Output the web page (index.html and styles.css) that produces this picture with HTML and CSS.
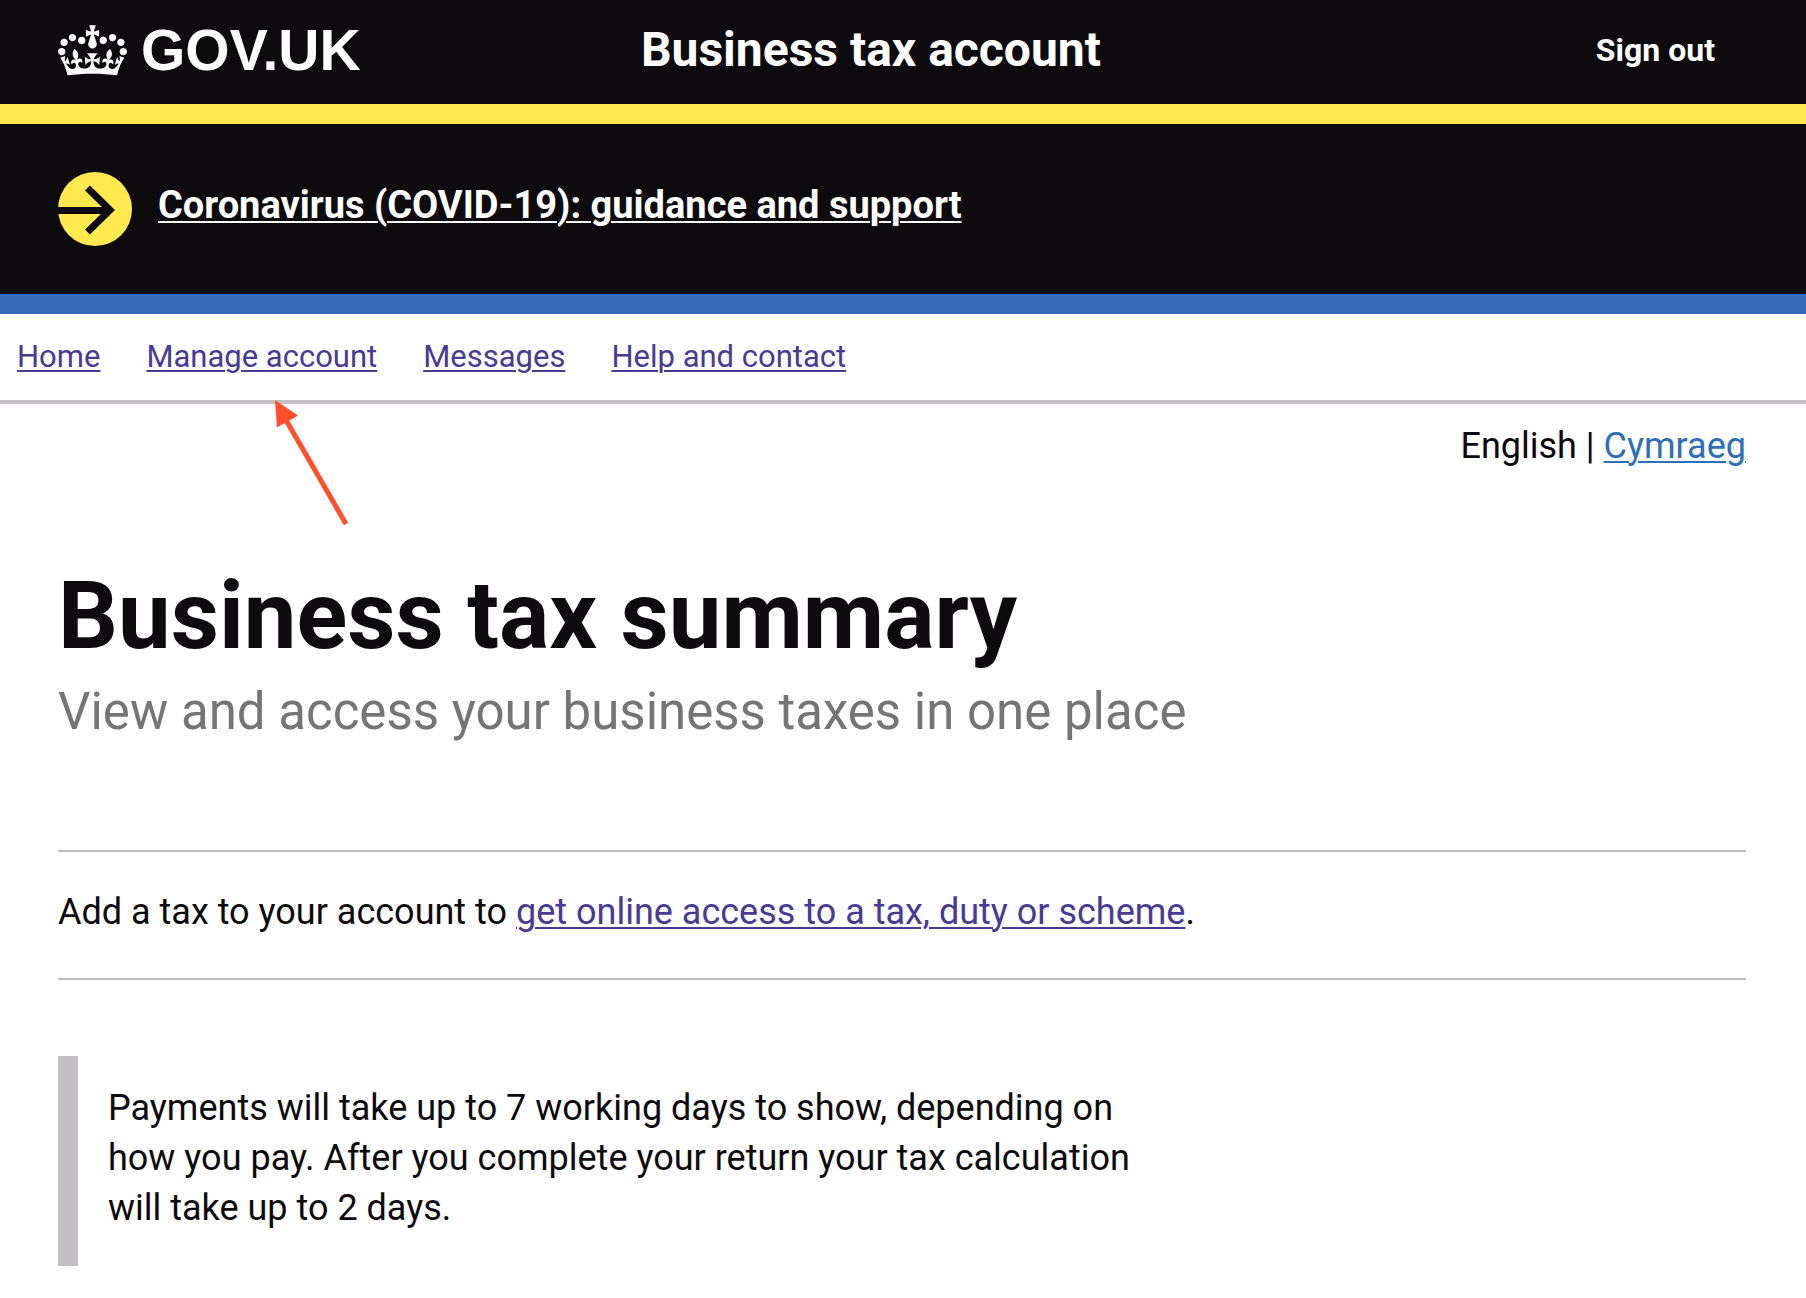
FILE: index.html
```html
<!DOCTYPE html>
<html lang="en">
  <head>
    <meta charset="UTF-8" />
    <meta name="viewport" content="width=device-width, initial-scale=1.0" />
    <title>Business tax account - GOV.UK</title>
    <link rel="stylesheet" href="styles.css">
  </head>
  <body>
    <header class="header">
      <a class="logo" href="#">
        <svg class="crown" viewBox="0 0 132 97" aria-hidden="true">
          <path d="M25 30.2c3.5 1.5 7.7-.2 9.1-3.7 1.5-3.6-.2-7.8-3.9-9.2-3.6-1.4-7.6.3-9.1 3.9-1.4 3.5.3 7.5 3.9 9zM9 39.5c3.6 1.5 7.8-.2 9.2-3.7 1.5-3.6-.2-7.8-3.9-9.1-3.6-1.5-7.6.2-9.1 3.8-1.4 3.5.3 7.5 3.8 9zM4.4 57.2c3.5 1.5 7.7-.2 9.1-3.8 1.5-3.6-.2-7.7-3.9-9.1-3.5-1.5-7.6.3-9.1 3.8-1.4 3.5.3 7.6 3.9 9.1zm38.3-21.4c3.5 1.5 7.7-.2 9.1-3.8 1.5-3.6-.2-7.7-3.9-9.1-3.6-1.5-7.6.3-9.1 3.8-1.3 3.6.4 7.7 3.9 9.1zm64.4-5.6c-3.6 1.5-7.8-.2-9.1-3.7-1.5-3.6.2-7.8 3.8-9.2 3.6-1.4 7.7.3 9.2 3.9 1.3 3.5-.4 7.5-3.9 9zm15.9 9.3c-3.6 1.5-7.7-.2-9.1-3.7-1.5-3.6.2-7.8 3.7-9.1 3.6-1.5 7.7.2 9.2 3.8 1.5 3.5-.3 7.5-3.8 9zm4.7 17.7c-3.6 1.5-7.8-.2-9.2-3.8-1.5-3.6.2-7.7 3.9-9.1 3.6-1.5 7.7.3 9.2 3.8 1.3 3.5-.4 7.6-3.9 9.1zM89.3 35.8c-3.6 1.5-7.8-.2-9.2-3.8-1.4-3.6.2-7.7 3.9-9.1 3.6-1.5 7.7.3 9.2 3.8 1.4 3.6-.3 7.7-3.9 9.1zM69.7 17.7l8.9 4.7V9.3l-8.9 2.8c-.2-.3-.5-.6-.9-.9L72.4 0H59.6l3.5 11.2c-.3.3-.6.5-.9.9l-8.8-2.8v13.1l8.8-4.7c.3.3.6.7.9.9l-5 15.4v.1c-.2.8-.4 1.6-.4 2.4 0 4.1 3.1 7.5 7 8.1h.2c.3 0 .7.1 1 .1.4 0 .7 0 1-.1h.2c4-.6 7.1-4.1 7.1-8.1 0-.8-.1-1.7-.4-2.4V34l-5.1-15.4c.4-.2.7-.6 1-.9zM66 92.8c16.9 0 32.8 1.1 47.1 3.2 4-16.9 8.9-26.7 14-33.5l-9.6-3.4c1 4.9 1.1 7.2 0 10.2-1.5-1.4-3-4.3-4.2-8.7L108.6 76c2.8-2 5-3.2 7.5-3.3-4.4 9.4-10 11.9-13.6 11.2-4.3-.8-6.3-4.6-5.6-7.9 1-4.7 5.7-5.9 8-.5 4.3-8.7-3-11.4-7.6-8.8 7.1-7.2 7.9-13.5 2.1-21.1-8 6.1-8.1 12.3-4.5 20.8-4.7-5.4-12.1-2.5-9.5 6.2 3.4-5.2 7.9-2 7.2 3.1-.6 4.3-6.4 7.8-13.5 7.2-10.3-.9-10.9-8-11.2-13.8 2.5-.5 7.1 1.8 11 7.3L80.2 60c-4.1 4.4-8 5.3-12.3 5.4 1.4-4.4 8-11.6 8-11.6H55.5s6.4 7.2 7.9 11.6c-4.2-.1-8-1-12.3-5.4l1.4 16.4c3.9-5.5 8.5-7.7 10.9-7.3-.3 5.8-.9 12.8-11.1 13.8-7.2.6-12.9-2.9-13.5-7.2-.7-5 3.8-8.3 7.1-3.1 2.7-8.7-4.6-11.6-9.4-6.2 3.7-8.5 3.6-14.7-4.6-20.8-5.8 7.6-5 13.9 2.2 21.1-4.7-2.6-11.9.1-7.7 8.8 2.3-5.5 7.1-4.2 8.1.5.7 3.3-1.3 7.1-5.7 7.9-3.5.7-9-1.8-13.5-11.2 2.5.1 4.7 1.3 7.5 3.3l-4.7-15.4c-1.2 4.4-2.7 7.2-4.3 8.7-1.1-3-.9-5.3 0-10.2l-9.5 3.4c5 6.9 9.9 16.7 14 33.5 14.8-2.1 30.8-3.2 47.7-3.2z" />
        </svg>
        <span>GOV.UK</span>
      </a>
      <a class="service-name" href="#">Business tax account</a>
      <a class="sign-out" href="#">Sign out</a>
    </header>

    <section class="covid">
      <svg class="covid-icon" viewBox="0 0 74 74" aria-hidden="true">
        <circle cx="37" cy="37" r="37" />
        <path d="M0 38.500H50M29.500 16L52 38L29.500 60" />
      </svg>
      <a class="covid-link" href="#">Coronavirus (COVID-19): guidance and support</a>
    </section>

    <nav class="nav">
      <a href="#">Home</a>
      <a href="#">Manage account</a>
      <a href="#">Messages</a>
      <a href="#">Help and contact</a>
      <!-- pointer to "Manage account" -->
      <svg class="pointer" viewBox="0 0 78 130" aria-hidden="true">
        <path class="pointer-line" d="M14 22L74 126" />
        <path class="pointer-head" d="M3 2L26 17.500L5 29.500z" />
      </svg>
    </nav>

    <main class="main">
      <p class="language">English | <a href="#">Cymraeg</a></p>

      <h1 class="title">Business tax summary</h1>
      <p class="caption">View and access your business taxes in one place</p>

      <p class="add-tax">
        Add a tax to your account to
        <a href="#">get online access to a tax, duty or scheme</a>.
      </p>

      <div class="inset">
        Payments will take up to 7 working days to show, depending on how you pay. After you complete your return your tax calculation will take up to 2 days.
      </div>
    </main>
  </body>
</html>
```

FILE: styles.css
```css
* {
  box-sizing: border-box;
}

body {
  margin: 0;
  background-color: #fefefe;
  color: #0d0b0e;
  font-family: Roboto, "Liberation Sans", sans-serif;
  font-size: 36px;
  line-height: 50px;
}

p,
h1 {
  margin: 0;
}

a {
  color: #483a95;
  text-decoration-thickness: 2px;
  text-underline-offset: 3px;
}

/* header */
.header {
  display: grid;
  grid-template-columns: 35% 1fr auto;
  column-gap: 3px;
  align-items: center;
  padding: 20px 91px 24px 58px;
  background-color: #0d0b0e;
  border-bottom: 20px solid #ffe94f;
}
.header a {
  color: #fff;
  font-weight: bold;
  line-height: 60px;
  text-decoration: none;
}
.logo {
  display: flex;
  align-items: center;
  gap: 14px;
  font-family: "Liberation Sans", Arial, sans-serif;
  font-size: 57px;
}
.crown {
  width: 69px;
  height: 51px;
  fill: #fff;
}
.service-name {
  font-size: 48px;
}
.sign-out {
  font-size: 32px;
}

/* coronavirus banner */
.covid {
  display: flex;
  align-items: center;
  gap: 26px;
  padding: 48px 58px;
  background-color: #0d0b0e;
  border-bottom: 20px solid #346bb8;
}
.covid-icon {
  flex: none;
  width: 74px;
  height: 74px;
  fill: #ffe94f;
}
.covid-icon path {
  fill: none;
  stroke: #0d0b0e;
  stroke-width: 7;
}
.covid-link {
  padding-bottom: 8px;
  color: #fff;
  font-size: 38px;
  font-weight: bold;
}

/* account menu */
.nav {
  position: relative;
  display: flex;
  flex-wrap: wrap;
  gap: 0 46px;
  padding: 23px 17px;
  border-bottom: 4px solid #c3c0c3;
  font-size: 31px;
  line-height: 40px;
}
.pointer {
  position: absolute;
  top: 84px;
  left: 272px;
  width: 78px;
  height: 130px;
}
.pointer-line {
  stroke: #ff4f2b;
  stroke-width: 5;
}
.pointer-head {
  fill: #ff4f2b;
}

/* page content */
.main {
  padding: 17px 60px 32px 58px;
}
.language {
  margin-bottom: 95px;
  text-align: right;
}
.language a {
  color: #2e6fb5;
}
.title {
  margin-bottom: 16px;
  font-size: 94px;
  line-height: 100px;
}
.caption {
  margin-bottom: 108px;
  color: #757477;
  font-size: 51px;
  line-height: 60px;
}
.add-tax {
  margin-bottom: 76px;
  padding: 35px 0 41px;
  border-top: 2px solid #bdbbbe;
  border-bottom: 2px solid #bdbbbe;
}
.inset {
  max-width: 1120px;
  padding: 27px 30px 33px;
  border-left: 20px solid #c3c0c3;
}
```
